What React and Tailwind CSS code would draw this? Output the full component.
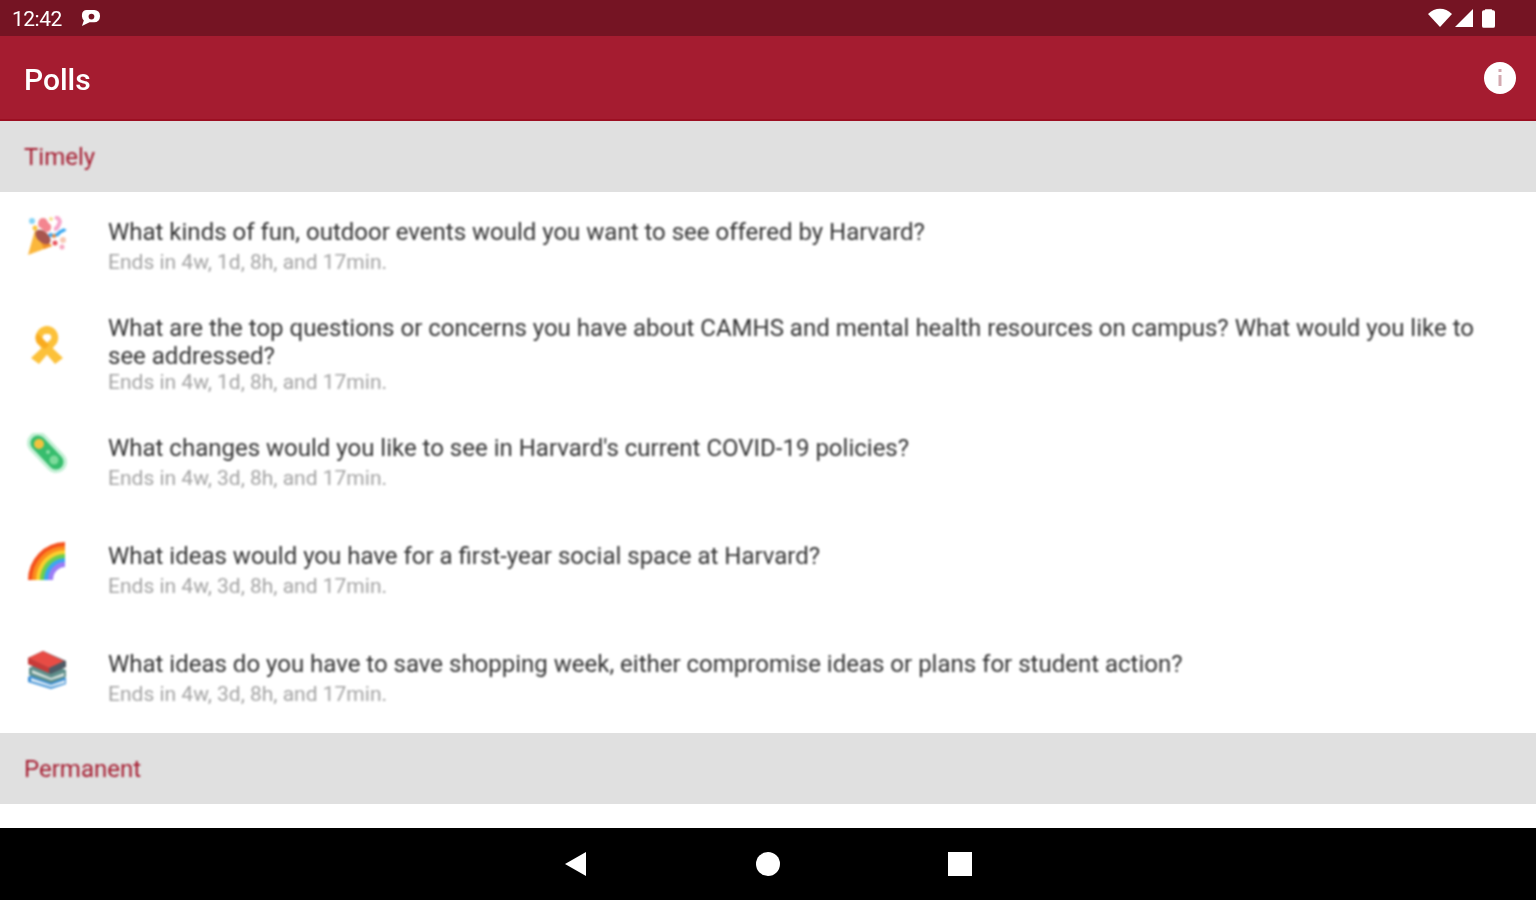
const polls = [
  { id: 1, row: 'h-[96px] pt-[26px]', icon: 'mt-[-2px]', gap: 'mt-[4px]', Icon: PartyIcon, title: 'What kinds of fun, outdoor events would you want to see offered by Harvard?', ends: 'Ends in 4w, 1d, 8h, and 17min.' },
  { id: 2, row: 'h-[121px] pt-[26px]', icon: 'mt-[11px]', gap: 'mt-0', Icon: RibbonIcon, title: 'What are the top questions or concerns you have about CAMHS and mental health resources on campus? What would you like to see addressed?', ends: 'Ends in 4w, 1d, 8h, and 17min.' },
  { id: 3, row: 'h-[108px] pt-[25px]', icon: 'mt-[-1px]', gap: 'mt-[4px]', Icon: MicrobeIcon, title: "What changes would you like to see in Harvard's current COVID-19 policies?", ends: 'Ends in 4w, 3d, 8h, and 17min.' },
  { id: 4, row: 'h-[108px] pt-[25px]', icon: 'mt-[-2px]', gap: 'mt-[4px]', Icon: RainbowIcon, title: 'What ideas would you have for a first-year social space at Harvard?', ends: 'Ends in 4w, 3d, 8h, and 17min.' },
  { id: 5, row: 'h-[108px] pt-[25px]', icon: 'mt-[-1px]', gap: 'mt-[4px]', Icon: BooksIcon, title: 'What ideas do you have to save shopping week, either compromise ideas or plans for student action?', ends: 'Ends in 4w, 3d, 8h, and 17min.' },
];

function PartyIcon() {
  return (
    <svg viewBox="0 0 40 40" className="w-[40px] h-[40px]">
      <path d="M8 14 L25 30 L1 39 Z" fill="#fbb73c" />
      <path d="M8 14 L25 30 L17 33 Z" fill="#f2932a" />
      <ellipse cx="16" cy="21" rx="9" ry="5.5" transform="rotate(42 16 21)" fill="#a8564e" />
      <path d="M12 11c-2-4 0-9 4-9 5 0 4 5 7 6 3 3 0 9-4 8-3-1-4-4-7-5z" fill="#f4858f" />
      <path d="M28 1c4 1 6 4 4 7-1 3-3 5-5 5" fill="none" stroke="#f6a5ca" strokeWidth="4" />
      <path d="M22 18c4 3 9 1 10-1s5-2 6-4" fill="none" stroke="#38a7f1" strokeWidth="3.5" />
      <circle cx="5" cy="5" r="3" fill="#86d4f6" />
      <circle cx="8" cy="12" r="2.5" fill="#f9c23c" />
      <circle cx="24" cy="3" r="2" fill="#f9e08c" />
      <circle cx="28" cy="27" r="2.5" fill="#e8505b" />
      <circle cx="36" cy="24" r="3" fill="#f7c9b4" />
      <circle cx="35" cy="31" r="2.5" fill="#f7a8c0" />
      <circle cx="27" cy="20" r="2" fill="#f28b3c" />
    </svg>
  );
}

function RibbonIcon() {
  return (
    <svg viewBox="0 0 40 40" className="w-[40px] h-[40px]">
      <path d="M12 39 L4 33 L24 14 C25 11 24 9 20 9 C16 9 15 11 16 14 L36 33 L28 39 L10 18 C6 10 12 1 20 1 C28 1 34 10 30 18 Z" fill="#fcc139" />
      <path d="M16 14 L22 20 L18 24 L10 18 C8 14 8 11 10 8 Z" fill="#f9ab1f" />
    </svg>
  );
}

function MicrobeIcon() {
  return (
    <svg viewBox="0 0 40 40" className="w-[40px] h-[40px]">
      <path d="M11 10 L29 29" stroke="#4fd084" strokeOpacity="0.35" strokeWidth="22" strokeLinecap="round" />
      <path d="M11 10 L29 29" stroke="#37bd6d" strokeWidth="15" strokeLinecap="round" />
      <circle cx="12" cy="11" r="5" fill="#f2c23e" />
      <circle cx="27" cy="27" r="4.5" fill="#7edb9c" />
      <circle cx="21" cy="19" r="2" fill="#8ee0a9" />
    </svg>
  );
}

function RainbowIcon() {
  return (
    <svg viewBox="0 0 40 40" className="w-[40px] h-[40px]">
      <path d="M1 40 A37 38 0 0 1 38 2 V13 A26 27 0 0 0 12 40 Z" fill="#f4511e" />
      <path d="M5 40 A33 34 0 0 1 38 6 V13 A26 27 0 0 0 12 40 Z" fill="#fb8c1e" />
      <path d="M9 40 A29 30 0 0 1 38 10 V17 A22 23 0 0 0 16 40 Z" fill="#fbd02e" />
      <path d="M13 40 A25 26 0 0 1 38 14 V20 A19 20 0 0 0 19 40 Z" fill="#6ccf4e" />
      <path d="M17 40 A21 22 0 0 1 38 18 V24 A15 16 0 0 0 23 40 Z" fill="#39a9ef" />
      <path d="M21 40 A17 18 0 0 1 38 22 V27 A12 13 0 0 0 26 40 Z" fill="#9b7cf5" />
    </svg>
  );
}

function BooksIcon() {
  return (
    <svg viewBox="0 0 40 40" className="w-[40px] h-[40px]">
      <path d="M1 28 L15 21 L39 29 L39 35 L24 40 L1 33 Z" fill="#3b8fd6" />
      <path d="M4 29 L24 36 L38 31 L38 34 L24 38 L4 32 Z" fill="#e9f1f6" />
      <path d="M2 19 L16 12 L39 21 L39 28 L24 34 L2 26 Z" fill="#5f8f8b" />
      <path d="M5 21 L24 29 L37 24 L37 27 L24 31 L5 24 Z" fill="#dfe8e4" />
      <path d="M1 9 L16 2 L39 12 L39 18 L24 25 L1 15 Z" fill="#4d5b66" />
      <path d="M1 9 L16 2 L37 12 L22 19 Z" fill="#e84c45" />
      <path d="M1 9 L22 19 L22 24 L1 15 Z" fill="#c93a38" />
    </svg>
  );
}

function StatusBar() {
  return (
    <div className="h-[36px] bg-[#751423] flex items-center justify-between pl-[12px] pr-[41px] text-white">
      <div className="flex items-center gap-[18px] blur-[0.7px]">
        <span className="text-[21px] leading-none tracking-[-0.5px] mt-[2px]">12:42</span>
        <svg viewBox="0 0 22 20" className="w-[21px] h-[19px]">
          <path d="M7 1 H15 A6 6 0 0 1 21 7 V8 A6 6 0 0 1 15 14 H10 L2 18 L4 12 A6 6 0 0 1 2 8 V6 A5 5 0 0 1 7 1 Z" fill="#fff" />
          <circle cx="12" cy="8" r="3" fill="#751423" />
        </svg>
      </div>
      <div className="flex items-center gap-[2px] blur-[0.5px]">
        <svg viewBox="0 0 24 20" className="w-[24px] h-[20px]">
          <path d="M0 6 C7 -1 17 -1 24 6 L12 19 Z" fill="#fff" />
        </svg>
        <svg viewBox="0 0 20 20" className="w-[20px] h-[20px]">
          <path d="M19 1 V19 H1 Z" fill="#fff" />
        </svg>
        <svg viewBox="0 0 14 20" className="w-[13px] h-[19px] ml-[6px]">
          <path d="M4 0 H10 A1 1 0 0 1 11 1 H12 A2 2 0 0 1 14 3 V18 A2 2 0 0 1 12 20 H2 A2 2 0 0 1 0 18 V3 A2 2 0 0 1 2 1 H3 A1 1 0 0 1 4 0 Z" fill="#fff" />
        </svg>
      </div>
    </div>
  );
}

function AppBar() {
  return (
    <div className="h-[85px] bg-[#a51c30] border-b-2 border-[#9c0f22] flex items-center justify-between pl-[24px] pr-[20px]">
      <h1 className="text-[30px] font-medium text-white leading-none mt-[5px] blur-[0.7px]">Polls</h1>
      <svg viewBox="0 0 32 32" className="w-[32px] h-[32px] blur-[0.5px]">
        <circle cx="16" cy="16" r="16" fill="#fff" />
        <rect x="14.5" y="13" width="3" height="11" fill="#d3a9b0" />
        <rect x="14.5" y="7" width="3" height="3" fill="#d3a9b0" />
      </svg>
    </div>
  );
}

function SectionHeader({ label }) {
  return (
    <div className="h-[71px] bg-[#e0e0e0] flex items-center pl-[24px] text-[24px] text-[#a51c30]">
      <span className="blur-[0.8px]">{label}</span>
    </div>
  );
}

function PollRow({ poll }) {
  const { Icon } = poll;
  return (
    <div className={`flex ${poll.row}`}>
      <div className="w-[108px] shrink-0 pl-[27px]">
        <div className={`${poll.icon} blur-[1px]`}>
          <Icon />
        </div>
      </div>
      <div className="flex-1 pr-[48px] blur-[0.8px]">
        <div className="text-[24px] leading-[28px] text-[#333333]">{poll.title}</div>
        <div className={`text-[21px] leading-[25px] text-[#a3a3a3] ${poll.gap}`}>{poll.ends}</div>
      </div>
    </div>
  );
}

export default function App() {
  return (
    <div className="w-[1536px] h-[900px] flex flex-col overflow-hidden bg-white font-['Roboto',sans-serif]">
      <StatusBar />
      <AppBar />
      <div className="flex-1 overflow-hidden">
        <SectionHeader label="Timely" />
        {polls.map(poll => (
          <PollRow key={poll.id} poll={poll} />
        ))}
        <SectionHeader label="Permanent" />
      </div>
      {/* nav bar */}
      <div className="h-[72px] bg-black flex items-center justify-center gap-[168px] shrink-0">
        <svg viewBox="0 0 24 26" className="w-[24px] h-[26px] blur-[0.5px]">
          <path d="M22 1 V25 L1 13 Z" fill="#fff" />
        </svg>
        <div className="w-[24px] h-[24px] rounded-full bg-white blur-[0.5px]" />
        <div className="w-[24px] h-[24px] bg-white blur-[0.5px]" />
      </div>
    </div>
  );
}
